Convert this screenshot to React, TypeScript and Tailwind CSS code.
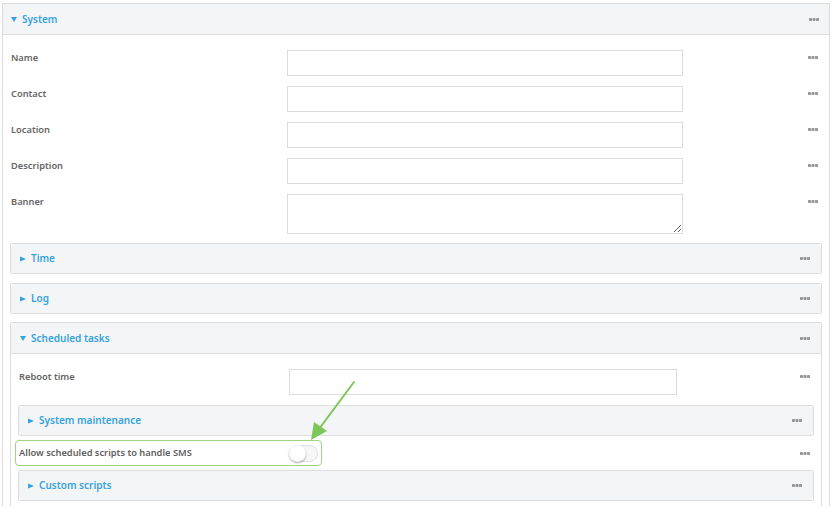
import React from "react";

const FONT = { fontFamily: '"Noto Sans", "Open Sans", sans-serif' };

function Dots() {
  return (
    <svg width="10" height="3" viewBox="0 0 10 3" className="shrink-0">
      <rect x="0" y="0" width="3" height="3" rx="0.8" fill="#959595" />
      <rect x="3.5" y="0" width="3" height="3" rx="0.8" fill="#959595" />
      <rect x="7" y="0" width="3" height="3" rx="0.8" fill="#959595" />
    </svg>
  );
}

function Caret({ open }: { open: boolean }) {
  return open ? (
    <svg width="6" height="6" viewBox="0 0 6 6" className="shrink-0">
      <polygon points="0,1 6,1 3,6" fill="#35a3dc" />
    </svg>
  ) : (
    <svg width="6" height="6" viewBox="0 0 6 6" className="shrink-0">
      <polygon points="0,0.5 6,3 0,5.5" fill="#35a3dc" />
    </svg>
  );
}

function Collapsed({ title }: { title: string }) {
  return (
    <div className="border border-[#dddddd] rounded-[2px] overflow-hidden">
      <div className="h-[29px] flex items-center justify-between pl-[9px] pr-[11px] bg-[#f4f5f7]">
        <div className="flex items-center gap-[5px]">
          <Caret open={false} />
          <span className="text-[10px] font-semibold text-[#35a3dc]">{title}</span>
        </div>
        <Dots />
      </div>
    </div>
  );
}

function FieldRow({
  label,
  labelW,
  inputW,
  area,
}: {
  label: string;
  labelW: string;
  inputW: string;
  area?: boolean;
}) {
  return (
    <div className="flex items-start justify-between pr-[4px]">
      <div className="flex items-start">
        <div className={`${labelW} pl-[1px] pt-[1px] text-[9.3px] leading-[14px] font-semibold text-[#666666]`}>
          {label}
        </div>
        {area ? (
          <textarea
            className={`${inputW} h-[40px] border border-[#dcdcdc] bg-white block outline-none`}
          />
        ) : (
          <div className={`${inputW} h-[26px] border border-[#dcdcdc] bg-white`} />
        )}
      </div>
      <div className="pt-[6px]">
        <Dots />
      </div>
    </div>
  );
}

export default function App() {
  return (
    <div className="w-[834px] h-[506px] overflow-hidden bg-white pl-[2px] pr-[4px] pt-[3px] relative" style={FONT}>
      {/* Outer System panel */}
      <div className="border border-b-0 border-[#dddddd] h-[510px]">
        <div className="border-b border-[#dddddd]">
          <div className="h-[30px] flex items-center justify-between pl-[8px] pr-[10px] bg-[#f4f5f7]">
            <div className="flex items-center gap-[5px]">
              <Caret open={true} />
              <span className="text-[10px] font-semibold text-[#35a3dc]">System</span>
            </div>
            <Dots />
          </div>
        </div>
        <div className="pl-[7px] pr-[7px] pt-[15px] flex flex-col">
          <div className="flex flex-col gap-[10px]">
            <FieldRow label="Name" labelW="w-[277px]" inputW="w-[396px]" />
            <FieldRow label="Contact" labelW="w-[277px]" inputW="w-[396px]" />
            <FieldRow label="Location" labelW="w-[277px]" inputW="w-[396px]" />
            <FieldRow label="Description" labelW="w-[277px]" inputW="w-[396px]" />
            <FieldRow label="Banner" labelW="w-[277px]" inputW="w-[396px]" area />
          </div>
          <div className="mt-[9px] flex flex-col">
            <Collapsed title="Time" />
            <div className="mt-[9px]">
              <Collapsed title="Log" />
            </div>
            {/* Scheduled tasks */}
            <div className="mt-[8px] border border-b-0 border-[#dddddd] rounded-t-[2px] h-[200px]">
              <div className="border-b border-[#dddddd]">
                <div className="h-[30px] flex items-center justify-between pl-[9px] pr-[11px] bg-[#f4f5f7]">
                  <div className="flex items-center gap-[5px]">
                    <Caret open={true} />
                    <span className="text-[10px] font-semibold text-[#35a3dc]">Scheduled tasks</span>
                  </div>
                  <Dots />
                </div>
              </div>
              <div className="pl-[7px] pr-[7px] pt-[15px] flex flex-col">
                <FieldRow label="Reboot time" labelW="w-[271px]" inputW="w-[388px]" />
                <div className="mt-[10px]">
                  <Collapsed title="System maintenance" />
                </div>
                <div className="h-[34px] flex items-center justify-between pr-[4px] relative">
                  <div className="flex items-center">
                    <div className="w-[271px] pl-[1px] text-[9.3px] font-semibold text-[#5f5f5f]">
                      Allow scheduled scripts to handle SMS
                    </div>
                    <div className="w-[29px] h-[17px] rounded-full border border-[#dedede] bg-[#f7f7f7] relative">
                      <div className="absolute left-[-1px] top-[-1px] w-[17px] h-[17px] rounded-full bg-white shadow-[0_1px_2px_rgba(0,0,0,0.35)]" />
                    </div>
                  </div>
                  <Dots />
                  <div className="absolute left-[-3px] top-[4px] w-[307px] h-[26px] border border-[#9fd57f] rounded-[4px] pointer-events-none" />
                </div>
                <Collapsed title="Custom scripts" />
              </div>
            </div>
          </div>
        </div>
      </div>
      {/* Annotation arrow */}
      <svg className="absolute left-0 top-0 pointer-events-none" width="834" height="506">
        <line x1="354" y1="382" x2="319" y2="429" stroke="#7cc65a" strokeWidth="2" strokeLinecap="round" />
        <polygon points="311,440 314,422 327,431" fill="#7cc65a" />
      </svg>
    </div>
  );
}
